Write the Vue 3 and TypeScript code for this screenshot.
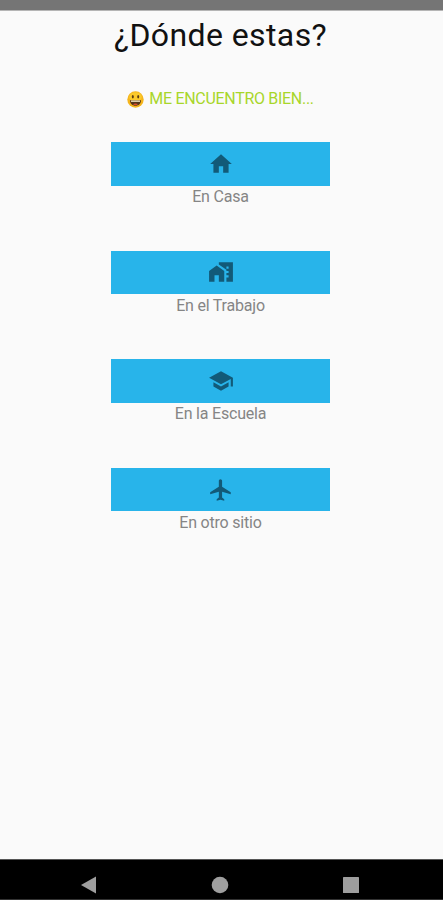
<script setup lang="ts">
interface Place {
  id: string
  label: string
  paths: string[]
}

const places: Place[] = [
  { id: 'home', label: 'En Casa', paths: ['M10 20v-6h4v6h5v-8h3L12 3 2 12h3v8z'] },
  {
    id: 'work',
    label: 'En el Trabajo',
    paths: [
      'M1 11v10h5v-6h4v6h5V11L8 6z',
      'M10 3v1.97l7 5V11h2v2h-2v2h2v2h-2v4h6V3H10zm9 6h-2V7h2v2z',
    ],
  },
  {
    id: 'school',
    label: 'En la Escuela',
    paths: ['M5 13.18v4L12 21l7-3.82v-4L12 17l-7-3.82zM12 3L1 9l11 6 9-4.91V17h2V9L12 3z'],
  },
  {
    id: 'other',
    label: 'En otro sitio',
    paths: [
      'M21 16v-2l-8-5V3.5c0-.83-.67-1.5-1.5-1.5S10 2.67 10 3.5V9l-8 5v2l8-2.5V19l-2 1.5V22l3.5-1 3.5 1v-1.5L13 19v-5.5l8 2.5z',
    ],
  },
]
</script>

<template>
  <div class="screen">
    <div class="status"></div>
    <main class="content">
      <h1 class="title">¿Dónde estas?</h1>
      <p class="mood">
        <svg class="face" viewBox="0 0 17 17" aria-hidden="true">
          <circle cx="8.5" cy="8.5" r="8.2" fill="#f5b51c" />
          <ellipse cx="8.5" cy="6" rx="6.3" ry="4.8" fill="#fbc92a" />
          <ellipse cx="5.8" cy="5.7" rx="1" ry="1.7" fill="#5b3b12" />
          <ellipse cx="11.2" cy="5.7" rx="1" ry="1.7" fill="#5b3b12" />
          <path d="M3 9.3h11c0 3.3-2.3 5.5-5.5 5.5S3 12.6 3 9.3z" fill="#57351a" />
          <path d="M4 9.5h9v1.3H4z" fill="#fff3d0" />
          <path d="M6 13.3c1.5-1 3.5-1 5 0-1.5 1.4-3.5 1.4-5 0z" fill="#d9502e" />
        </svg>
        <span class="mood-text">ME ENCUENTRO BIEN...</span>
      </p>
      <div class="places">
        <div v-for="place in places" :key="place.id" class="place">
          <button class="tile" type="button" :aria-label="place.label">
            <svg class="icon" viewBox="0 0 24 24" aria-hidden="true">
              <path v-for="d in place.paths" :key="d" :d="d" />
            </svg>
          </button>
          <span class="label">{{ place.label }}</span>
        </div>
      </div>
    </main>
    <nav class="navbar">
      <svg class="nav-icon" viewBox="0 0 18 18"><path d="M1 9L16 .5v17z" /></svg>
      <svg class="nav-icon" viewBox="0 0 18 18"><circle cx="9" cy="9" r="8.3" /></svg>
      <svg class="nav-icon" viewBox="0 0 18 18"><rect x="1" y="1" width="16" height="16" rx=".6" /></svg>
    </nav>
  </div>
</template>

<style>
body {
  margin: 0;
  background: #fafafa;
}
</style>

<style scoped>
.screen {
  display: flex;
  flex-direction: column;
  height: 900px;
  overflow: hidden;
  background: #fafafa;
  font-family: Roboto, "Liberation Sans", sans-serif;
}
.status {
  flex: none;
  height: 10px;
  background: #757575;
  border-bottom: 1px solid #b5b5b5;
}
.content {
  flex: 1;
  display: flex;
  flex-direction: column;
  align-items: center;
  padding-right: 2px;
}
.title {
  margin: 4px 0 0;
  font-size: 32px;
  line-height: 40px;
  font-weight: 400;
  letter-spacing: 0.4px;
  color: #111;
}
.mood {
  display: flex;
  align-items: center;
  gap: 5px;
  height: 20px;
  margin: 34px 0 0;
}
.face {
  width: 17px;
  height: 17px;
}
.mood-text {
  font-size: 16px;
  line-height: 20px;
  letter-spacing: -0.3px;
  color: #a8d62a;
  white-space: nowrap;
}
.places {
  display: flex;
  flex-direction: column;
  gap: 42px;
  margin-top: 33px;
}
.place {
  display: flex;
  flex-direction: column;
  align-items: center;
  height: 66.6px;
}
.tile {
  display: flex;
  align-items: center;
  justify-content: center;
  flex: none;
  width: 219px;
  height: 43.5px;
  padding: 0;
  border: 0;
  background: #28b4ea;
}
.icon {
  width: 26px;
  height: 26px;
  fill: #125a78;
}
.label {
  margin-top: 1.5px;
  font-size: 16px;
  line-height: 20px;
  letter-spacing: -0.2px;
  color: #858585;
}
.navbar {
  flex: none;
  display: flex;
  align-items: center;
  justify-content: space-between;
  box-sizing: border-box;
  height: 41px;
  padding: 10px 83px 0 80px;
  border-top: 1px solid #555;
  border-bottom: 1px solid #333;
  background: #000;
}
.nav-icon {
  width: 18px;
  height: 18px;
  fill: #9e9e9e;
}
</style>
